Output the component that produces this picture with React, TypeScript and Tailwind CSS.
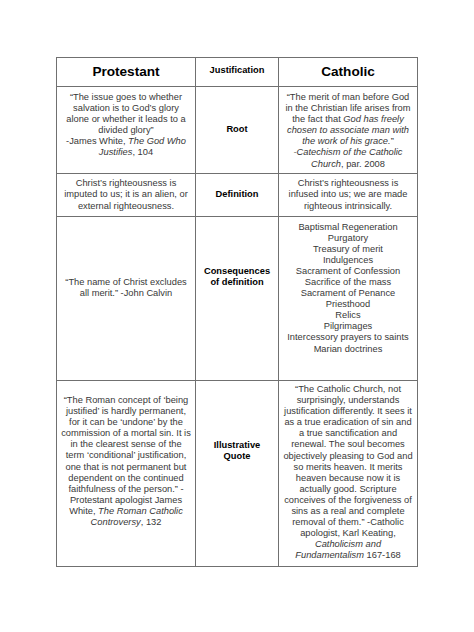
import React, { ReactNode } from 'react'

const Lines = ({ lines }: { lines: ReactNode[] }) => (
  <>
    {lines.map((l, i) => (
      <div key={i} className="whitespace-nowrap">
        {l}
      </div>
    ))}
  </>
)

const body = 'text-[9.3px] leading-[11.1px] text-[#383838] text-center'
const label = 'text-[9.3px] leading-[11.1px] font-bold text-black text-center'

const App = () => {
  return (
    <div className="w-[474px] h-[632px] bg-white pt-[57px] pl-[56px] font-['Liberation_Sans',Arial,sans-serif]">
      <div className="w-[362px] border-[1.5px] border-[#707070]">
        {/* header */}
        <div className="flex h-[29px] border-b-[1.5px] border-[#707070]">
          <div className="w-[139px] border-r-[1.5px] border-[#707070] flex items-center justify-center text-[13.6px] font-bold text-black">
            Protestant
          </div>
          <div className="w-[83px] border-r-[1.5px] border-[#707070] flex items-center justify-center pb-[3px] text-[9.3px] font-bold text-black">
            Justification
          </div>
          <div className="flex-1 flex items-center justify-center text-[13.6px] font-bold text-black">
            Catholic
          </div>
        </div>

        {/* root */}
        <div className="flex h-[87px] border-b-[1.5px] border-[#707070]">
          <div className={`w-[139px] border-r-[1.5px] border-[#707070] pt-[5px] ${body}`}>
            <Lines
              lines={[
                '“The issue goes to whether',
                'salvation is to God’s glory',
                'alone or whether it leads to a',
                'divided glory”',
                <>
                  -James White, <i>The God Who</i>
                </>,
                <>
                  <i>Justifies</i>, 104
                </>,
              ]}
            />
          </div>
          <div className={`w-[83px] border-r-[1.5px] border-[#707070] flex items-center justify-center ${label}`}>
            Root
          </div>
          <div className={`flex-1 pt-[5px] ${body}`}>
            <Lines
              lines={[
                '“The merit of man before God',
                'in the Christian life arises from',
                <>
                  the fact that <i>God has freely</i>
                </>,
                <i>chosen to associate man with</i>,
                <>
                  <i>the work of his grace.</i>”
                </>,
                <i>-Catechism of the Catholic</i>,
                <>
                  <i>Church</i>, par. 2008
                </>,
              ]}
            />
          </div>
        </div>

        {/* definition */}
        <div className="flex h-[43px] border-b-[1.5px] border-[#707070]">
          <div className={`w-[139px] border-r-[1.5px] border-[#707070] flex flex-col justify-center ${body}`}>
            <Lines
              lines={[
                'Christ’s righteousness is',
                'imputed to us; it is an alien, or',
                'external righteousness.',
              ]}
            />
          </div>
          <div className={`w-[83px] border-r-[1.5px] border-[#707070] flex items-center justify-center ${label}`}>
            Definition
          </div>
          <div className={`flex-1 flex flex-col justify-center ${body}`}>
            <Lines
              lines={[
                'Christ’s righteousness is',
                'infused into us; we are made',
                'righteous intrinsically.',
              ]}
            />
          </div>
        </div>

        {/* consequences */}
        <div className="flex h-[163.5px] border-b-[1.5px] border-[#707070]">
          <div className={`w-[139px] border-r-[1.5px] border-[#707070] pt-[60px] ${body}`}>
            <Lines lines={['“The name of Christ excludes', 'all merit.” -John Calvin']} />
          </div>
          <div className={`w-[83px] border-r-[1.5px] border-[#707070] pt-[49px] ${label}`}>
            <Lines lines={['Consequences', 'of definition']} />
          </div>
          <div className={`flex-1 pt-[4.5px] ${body}`}>
            <Lines
              lines={[
                'Baptismal Regeneration',
                'Purgatory',
                'Treasury of merit',
                'Indulgences',
                'Sacrament of Confession',
                'Sacrifice of the mass',
                'Sacrament of Penance',
                'Priesthood',
                'Relics',
                'Pilgrimages',
                'Intercessory prayers to saints',
                'Marian doctrines',
              ]}
            />
          </div>
        </div>

        {/* illustrative quote */}
        <div className="flex h-[185.5px]">
          <div className={`w-[139px] border-r-[1.5px] border-[#707070] pt-[14.5px] ${body}`}>
            <Lines
              lines={[
                '“The Roman concept of ‘being',
                'justified’ is hardly permanent,',
                'for it can be ‘undone’ by the',
                'commission of a mortal sin.  It is',
                'in the clearest sense of the',
                'term ‘conditional’ justification,',
                'one that is not permanent but',
                'dependent on the continued',
                'faithfulness of the person.” -',
                'Protestant apologist James',
                <>
                  White, <i>The Roman Catholic</i>
                </>,
                <>
                  <i>Controversy</i>, 132
                </>,
              ]}
            />
          </div>
          <div className={`w-[83px] border-r-[1.5px] border-[#707070] pt-[59.5px] ${label}`}>
            <Lines lines={['Illustrative', 'Quote']} />
          </div>
          <div className={`flex-1 pt-[3.5px] ${body}`}>
            <Lines
              lines={[
                '“The Catholic Church, not',
                'surprisingly, understands',
                'justification differently. It sees it',
                'as a true eradication of sin and',
                'a true sanctification and',
                'renewal. The soul becomes',
                'objectively pleasing to God and',
                'so merits heaven.  It merits',
                'heaven because now it is',
                'actually good. Scripture',
                'conceives of the forgiveness of',
                'sins as a real and complete',
                'removal of them.” -Catholic',
                'apologist, Karl Keating,',
                <i>Catholicism and</i>,
                <>
                  <Fund />
                </>,
              ]}
            />
          </div>
        </div>
      </div>
    </div>
  )
}

const Fund = () => (
  <>
    <i>Fundamentalism</i> 167-168
  </>
)

export default App
